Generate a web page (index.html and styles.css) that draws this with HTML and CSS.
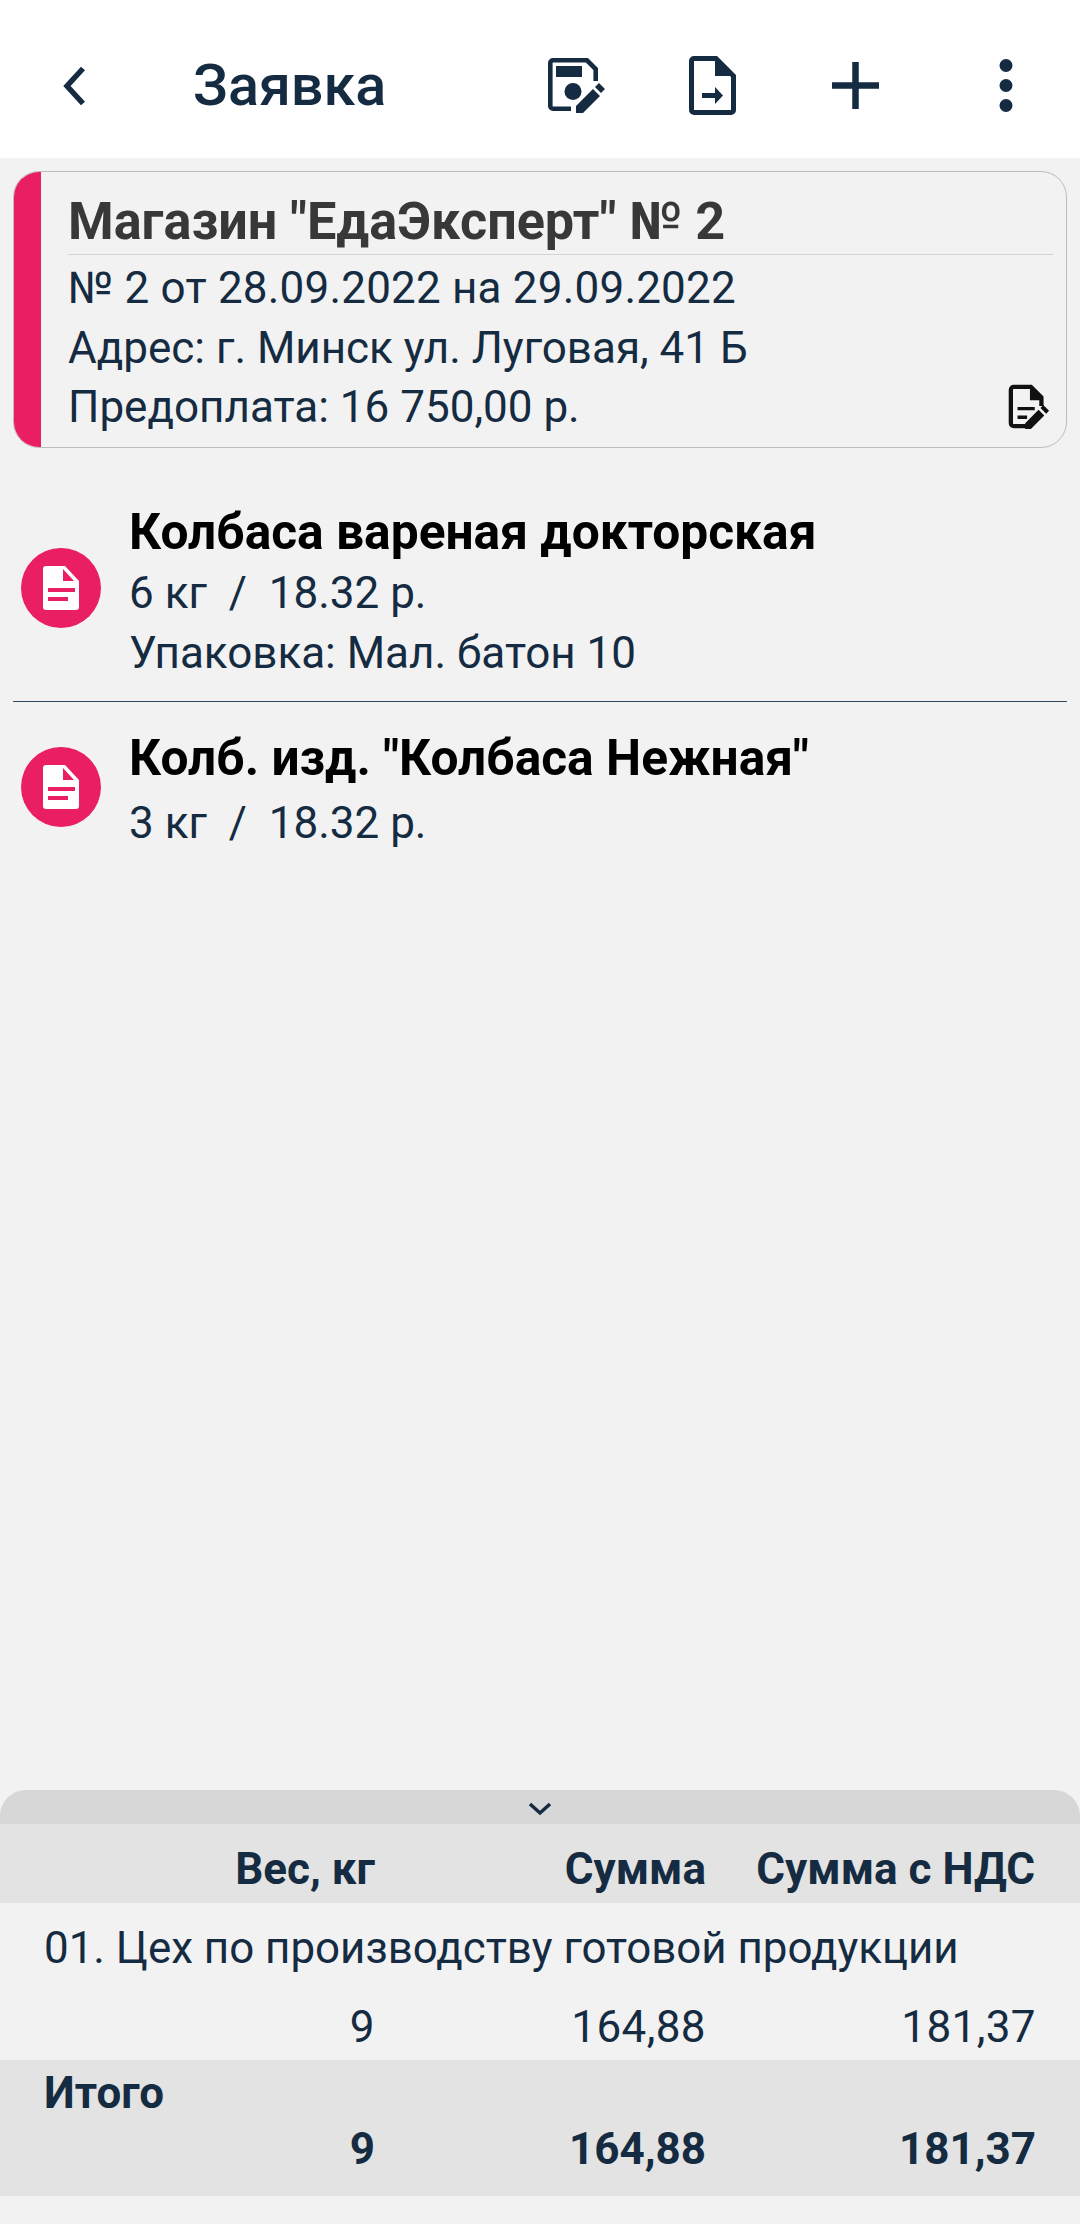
FILE: index.html
```html
<!DOCTYPE html>
<html lang="ru">
<head>
  <meta charset="UTF-8" />
  <title>Заявка</title>
  <link rel="stylesheet" href="styles.css">
</head>
<body>
  <header class="topbar">
    <svg class="back" viewBox="0 0 24 40"><path d="M21 2.500 5 20l16 17.500" fill="none" stroke="#152b41" stroke-width="5.500"/></svg>
    <h1>Заявка</h1>
    <div class="actions">
      <svg class="act act-save" viewBox="0 0 57 55"><path d="M23 50.700H5A2.700 2.700 0 0 1 2.300 48V5A2.700 2.700 0 0 1 5 2.300H39L47.700 11V23" fill="none" stroke="#152b41" stroke-width="4.600"/><rect x="8" y="8" width="26" height="11" fill="#152b41"/><circle cx="25" cy="33.500" r="8.500" fill="#152b41"/><path d="M28 55v-7L45 31l7 7-17 17zM47 29l4-4 6 6-4 4z" fill="#152b41"/></svg>
      <svg class="act act-file" viewBox="0 0 47 59"><path d="M5 2.500H27L44.500 20V54a2.500 2.500 0 0 1-2.500 2.500H5A2.500 2.500 0 0 1 2.500 54V5A2.500 2.500 0 0 1 5 2.500z" fill="none" stroke="#152b41" stroke-width="5"/><path d="M26 1h2L47 20H26z" fill="#152b41"/><path d="M13 37h13v-6l8 8.500-8 8.500v-6H13z" fill="#152b41"/></svg>
      <svg class="act act-plus" viewBox="0 0 47 47"><path d="M23.500 0v47M0 23.500h47" stroke="#152b41" stroke-width="6.500"/></svg>
      <svg class="act act-more" viewBox="0 0 14 53"><circle cx="7" cy="6.500" r="6.500" fill="#152b41"/><circle cx="7" cy="26.500" r="6.500" fill="#152b41"/><circle cx="7" cy="46.500" r="6.500" fill="#152b41"/></svg>
    </div>
  </header>

  <section class="card">
    <div class="card-bar"></div>
    <div class="card-body">
      <div class="card-title">Магазин "ЕдаЭксперт" № 2</div>
      <div class="card-line card-date">№ 2 от 28.09.2022 на 29.09.2022</div>
      <div class="card-line">Адрес: г. Минск ул. Луговая, 41 Б</div>
      <div class="card-line">Предоплата: 16 750,00 р.</div>
    </div>
    <svg class="card-edit" viewBox="0 0 44 48"><path d="M19 44H6a3 3 0 0 1-3-3V6a3 3 0 0 1 3-3h18l11 11v9" fill="none" stroke="#111" stroke-width="4.500"/><path d="M23 3h3l10 11v3H23z" fill="#111"/><path d="M10 24h18v3.500H10zM10 33h10v3.500H10z" fill="#111"/><path d="M18 47v-6l14-14 6 6-14 14zM34 25l3-3 6 6-3 3z" fill="#111"/></svg>
  </section>

  <ul class="goods">
    <li class="item">
      <span class="item-icon"><svg viewBox="0 0 36 44"><path d="M3 0h19l14 15v26a3 3 0 0 1-3 3H3a3 3 0 0 1-3-3V3a3 3 0 0 1 3-3z" fill="#fff"/><path d="M20 3v12h11z" fill="#e91e63"/><path d="M5 22h27v4H5zM5 31h20v4H5z" fill="#e91e63"/></svg></span>
      <div class="item-text">
        <div class="item-name">Колбаса вареная докторская</div>
        <div class="item-line">6 кг&nbsp; /&nbsp; 18.32 р.</div>
        <div class="item-line">Упаковка: Мал. батон 10</div>
      </div>
    </li>
    <li class="item">
      <span class="item-icon"><svg viewBox="0 0 36 44"><path d="M3 0h19l14 15v26a3 3 0 0 1-3 3H3a3 3 0 0 1-3-3V3a3 3 0 0 1 3-3z" fill="#fff"/><path d="M20 3v12h11z" fill="#e91e63"/><path d="M5 22h27v4H5zM5 31h20v4H5z" fill="#e91e63"/></svg></span>
      <div class="item-text">
        <div class="item-name">Колб. изд. "Колбаса Нежная"</div>
        <div class="item-line">3 кг&nbsp; /&nbsp; 18.32 р.</div>
      </div>
    </li>
  </ul>

  <section class="summary">
    <div class="handle"><svg viewBox="0 0 24 14"><path d="M2 2l10 9 10-9" fill="none" stroke="#152b41" stroke-width="3.500"/></svg></div>
    <div class="sum-row sum-head">
      <span>Вес, кг</span><span>Сумма</span><span>Сумма с НДС</span>
    </div>
    <div class="sum-group">
      <div class="sum-name">01. Цех по производству готовой продукции</div>
      <div class="sum-row sum-values"><span>9</span><span>164,88</span><span>181,37</span></div>
    </div>
    <div class="sum-group sum-total">
      <div class="sum-name">Итого</div>
      <div class="sum-row"><span>9</span><span>164,88</span><span>181,37</span></div>
    </div>
  </section>
</body>
</html>
```

FILE: styles.css
```css
body {
  font-family: Roboto, "Noto Sans", sans-serif;
  background-color: #f2f2f2;
  color: #152b41;
  margin: 0;
  height: 2224px;
  overflow: hidden;
  position: relative;
}

.topbar {
  height: 158px;
  box-sizing: border-box;
  padding: 13px 67px 0 62px;
  background: #fff;
  display: flex;
  align-items: center;
}

.back {
  width: 24px;
  height: 40px;
}

h1 {
  font-size: 57.500px;
  font-weight: 500;
  margin: 0 0 0 107px;
  line-height: 66px;
}

.actions {
  margin-left: auto;
  display: flex;
  align-items: center;
}

.act-save { width: 57px; height: 55px; }
.act-file { width: 47px; height: 59px; margin-left: 84px; }
.act-plus { width: 47px; height: 47px; margin-left: 96px; }
.act-more { width: 14px; height: 53px; margin-left: 120px; }

.card {
  position: relative;
  display: flex;
  margin: 13px 13px 0;
  height: 277px;
  box-sizing: border-box;
  border: 1px solid #bdbdbd;
  border-radius: 26px;
  overflow: hidden;
}

.card-bar {
  width: 27px;
  background: #e91e63;
  flex-shrink: 0;
}

.card-body {
  flex: 1;
  padding: 0 13px 0 27px;
}

.card-title {
  font-size: 52.200px;
  font-weight: 700;
  color: #383838;
  height: 83px;
  line-height: 100px;
  box-sizing: border-box;
  border-bottom: 1px solid #d4d4d4;
  margin-bottom: 4px;
  white-space: nowrap;
}

.card-line {
  font-size: 44px;
  line-height: 59.500px;
  white-space: nowrap;
}

.card-date {
  letter-spacing: 0.2px;
}

.card-edit {
  position: absolute;
  right: 16px;
  bottom: 16px;
  width: 42px;
  height: 48px;
}

.goods {
  list-style: none;
  margin: 0;
  padding: 0 13px;
}

.item {
  display: flex;
  align-items: flex-start;
  padding-top: 54px;
  height: 254px;
  box-sizing: border-box;
  border-bottom: 1px solid #30475e;
}

.item:last-child {
  border-bottom: none;
  height: auto;
  padding-top: 26px;
}

.item-icon {
  width: 80px;
  height: 80px;
  margin: 46px 28px 0 8px;
  border-radius: 50%;
  background: #e91e63;
  display: flex;
  align-items: center;
  justify-content: center;
  flex-shrink: 0;
}

.item:last-child .item-icon {
  margin-top: 19px;
}

.item-icon svg {
  width: 36px;
  height: 44px;
}

.item-name {
  font-size: 49.700px;
  font-weight: 700;
  color: #000;
  line-height: 61px;
  white-space: nowrap;
}

.item:last-child .item-name {
  margin-bottom: 4px;
}

.item-line {
  font-size: 44px;
  line-height: 60px;
  white-space: nowrap;
}

.summary {
  position: absolute;
  left: 0;
  right: 0;
  top: 1790px;
  border-radius: 26px 26px 0 0;
  overflow: hidden;
}

.handle {
  height: 34px;
  box-sizing: border-box;
  padding-top: 3px;
  background: #d7d7d7;
  display: flex;
  align-items: center;
  justify-content: center;
}

.handle svg {
  width: 24px;
  height: 14px;
}

.sum-row {
  display: grid;
  grid-template-columns: 375px 331px 329px;
  text-align: right;
  font-size: 44px;
  padding-right: 45px;
}

.sum-head {
  background: #e3e3e3;
  height: 79px;
  line-height: 90px;
  font-weight: 700;
}

.sum-group {
  background: #f2f2f2;
  height: 157px;
}

.sum-group .sum-row {
  grid-template-columns: 375px 331px 330px;
  padding-right: 44px;
  line-height: 66px;
}

.sum-name {
  font-size: 43.900px;
  padding-left: 44px;
  line-height: 91px;
  white-space: nowrap;
}

.sum-values {
  letter-spacing: 0.4px;
}

.sum-total {
  background: #e3e3e3;
  height: 136px;
  font-weight: 700;
}

.sum-total .sum-name {
  line-height: 66px;
}

.sum-group.sum-total .sum-row {
  line-height: 46px;
}
```
